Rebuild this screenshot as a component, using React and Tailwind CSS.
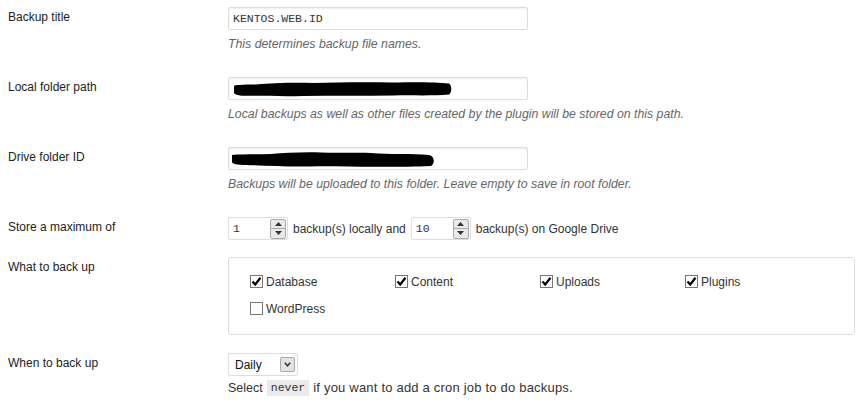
import React from "react";

function TextInput({ value, children }) {
  return (
    <div className="relative flex h-[23px] w-[300px] items-center rounded-[2px] border border-[#ddd] bg-white px-1 shadow-[inset_0_1px_2px_rgba(0,0,0,0.07)]">
      {value && (
        <span className="font-['Liberation_Mono',monospace] text-[11.5px] text-[#333]">{value}</span>
      )}
      {children}
    </div>
  );
}

function Description({ children }) {
  return (
    <p className="mt-[6px] font-['Liberation_Sans',Arial,sans-serif] text-[12.3px] italic leading-4 text-[#666]">{children}</p>
  );
}

function NumberInput({ value }) {
  return (
    <div className="flex h-[23px] w-[60px] items-center rounded-[2px] border border-[#ddd] bg-white pl-1 pr-[1px]">
      <span className="flex-1 font-['Liberation_Mono',monospace] text-[11.5px] text-[#333]">{value}</span>
      <div className="flex h-[20px] w-[16px] flex-col overflow-hidden rounded-[2px] border border-[#a9a9a9] bg-[#e9e9e9]">
        <div className="flex flex-1 items-center justify-center border-b border-[#a9a9a9]">
          <svg width="7" height="4" viewBox="0 0 7 4"><path d="M0 4 L3.5 0 L7 4 Z" fill="#333" /></svg>
        </div>
        <div className="flex flex-1 items-center justify-center">
          <svg width="7" height="4" viewBox="0 0 7 4"><path d="M0 0 L3.5 4 L7 0 Z" fill="#333" /></svg>
        </div>
      </div>
    </div>
  );
}

function Checkbox({ label, checked }) {
  return (
    <div className="flex h-[27px] items-start">
      <span className="mt-[1px] flex h-[13px] w-[13px] items-center justify-center border border-[#777] bg-white">
        {checked && (
          <svg width="11" height="11" viewBox="0 0 11 11">
            <path d="M1.5 5.5 L4.2 8.5 L9.5 1.8" stroke="#000" strokeWidth="2.2" fill="none" strokeLinejoin="miter" />
          </svg>
        )}
      </span>
      <span className="ml-[3px] text-[12px] leading-4 text-[#333]">{label}</span>
    </div>
  );
}

function Row({ label, className, children }) {
  return (
    <div className={`flex ${className}`}>
      <div className="mt-[2px] w-[228px] shrink-0 pl-2 leading-4 text-[#222]">{label}</div>
      <div className="flex-1">{children}</div>
    </div>
  );
}

export default function App() {
  return (
    <div className="min-h-screen bg-white pt-[7px] font-['Liberation_Sans',Arial,sans-serif] text-[12px]">
      <Row label="Backup title" className="h-[70px]">
        <TextInput value="KENTOS.WEB.ID" />
        <Description>This determines backup file names.</Description>
      </Row>

      <Row label="Local folder path" className="h-[70px]">
        <TextInput>
          <svg className="absolute left-[4px] top-[3px]" width="220" height="16" viewBox="0 0 220 16">
            <path
              d="M1 5 C1 4 10 3.5 22 3.5 C40 2 60 1.5 80 2 C110 1 140 1.2 165 1.5 C185 1 205 1.5 216 2.5 C219 4 219 12 216 13.5 C200 15 180 14 160 14.5 C130 15 100 14.5 70 15 C50 15.5 30 14.8 15 14.8 C8 15 2 14 1 12 Z"
              fill="#000"
            />
          </svg>
        </TextInput>
        <Description>Local backups as well as other files created by the plugin will be stored on this path.</Description>
      </Row>

      <Row label="Drive folder ID" className="h-[70px]">
        <TextInput>
          <svg className="absolute left-[2px] top-[3px]" width="206" height="17" viewBox="0 0 206 17">
            <path
              d="M1 4 C10 3 25 3.5 40 3 C55 2 70 0.8 90 1.5 C110 2.5 125 1 140 2 C160 3.5 180 2.5 198 4 C204 5 204 13 200 15 C185 16 170 15.5 150 15.8 C125 16 100 15 80 15.5 C55 16 35 14.5 15 14 C6 14 1 13 1 11 Z"
              fill="#000"
            />
          </svg>
        </TextInput>
        <Description>Backups will be uploaded to this folder. Leave empty to save in root folder.</Description>
      </Row>

      <Row label="Store a maximum of" className="h-[40px]">
        <div className="flex items-center text-[12px] text-[#333]">
          <NumberInput value="1" />
          <span className="ml-[5px] mr-[5px]">backup(s) locally and</span>
          <NumberInput value="10" />
          <span className="ml-[5px]">backup(s) on Google Drive</span>
        </div>
      </Row>

      <Row label="What to back up" className="h-[96px]">
        <div className="h-[78px] w-[627px] rounded-[3px] border border-[#ddd] bg-white pl-[21px] pt-[16px]">
          <div className="grid grid-cols-[145px_145px_145px_145px]">
            <Checkbox label="Database" checked />
            <Checkbox label="Content" checked />
            <Checkbox label="Uploads" checked />
            <Checkbox label="Plugins" checked />
            <Checkbox label="WordPress" />
          </div>
        </div>
      </Row>

      <Row label="When to back up" className="h-[51px]">
        <div className="flex h-[23px] w-[70px] items-center rounded-[2px] border border-[#ddd] bg-white pl-[6px] pr-[2px]">
          <span className="flex-1 text-[12px] text-[#111]">Daily</span>
          <span className="flex h-[15px] w-[15px] items-center justify-center rounded-[2px] border border-[#aaa] bg-[#e3e3e3]">
            <svg width="7" height="5" viewBox="0 0 7 5">
              <path d="M0.8 0.8 L3.5 3.8 L6.2 0.8" stroke="#333" strokeWidth="1.6" fill="none" />
            </svg>
          </span>
        </div>
        <p className="mt-[4px] flex items-center leading-4 text-[#333]">
          <span className="mr-[4px] text-[12.5px]">Select</span>
          <code className="bg-[#eaeaea] px-[4px] py-[1px] font-['Liberation_Mono','Courier_New',monospace] text-[11.5px] leading-[14px] text-[#333]">never</code>
          <span className="ml-[4px] text-[13px] tracking-[0.2px]">if you want to add a cron job to do backups.</span>
        </p>
      </Row>
    </div>
  );
}
